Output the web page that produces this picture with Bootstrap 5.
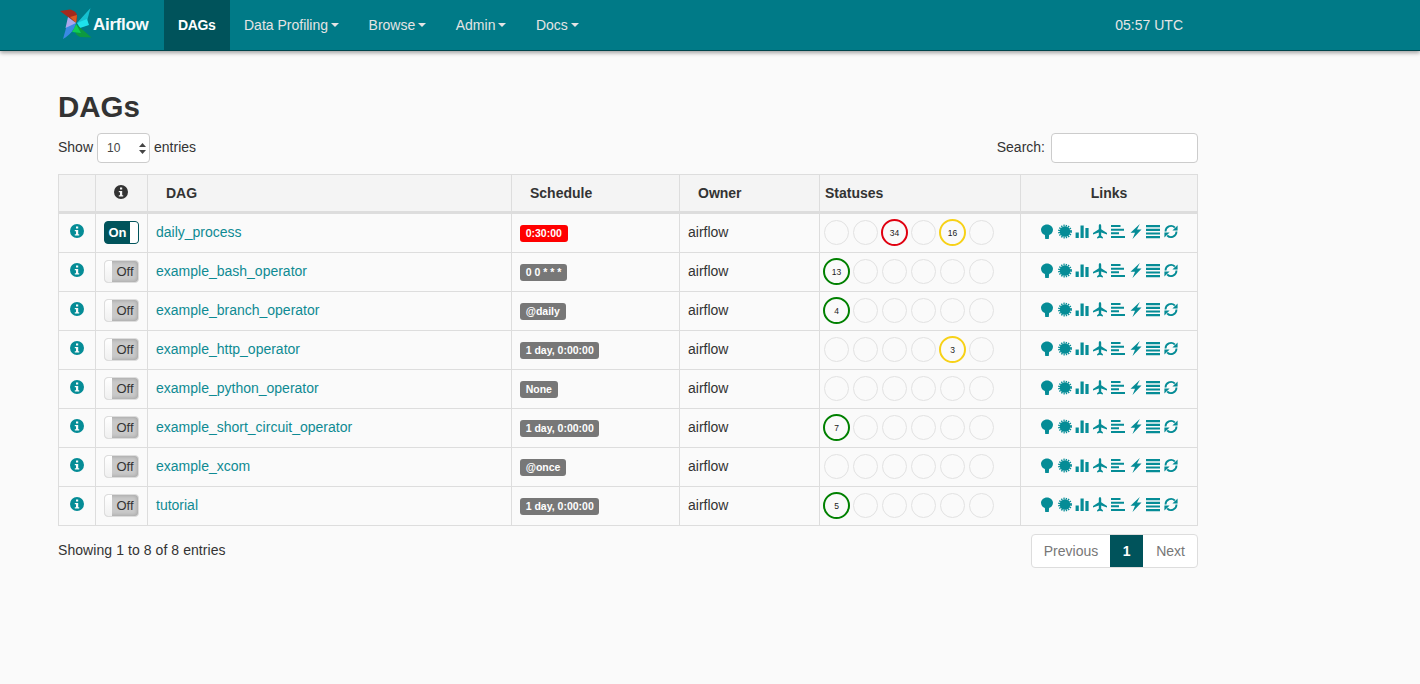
<!DOCTYPE html>
<html lang="en"><head><meta charset="utf-8"><title>Airflow - DAGs</title>
<link href="https://cdn.jsdelivr.net/npm/bootstrap@5.3.0/dist/css/bootstrap.min.css" rel="stylesheet">
<style>
html,body{height:100%}
body{background:#fafafa;color:#333;font-family:"Liberation Sans",Arial,sans-serif;font-size:14px;line-height:20px}
.af-nav{background:#007a87;height:51px;border-bottom:1px solid #00454c;box-shadow:0 2px 4px rgba(0,0,0,.35);padding:0 58px;display:flex;align-items:stretch}
.af-brand{display:flex;align-items:center;gap:1px;width:106px;color:#fff;font-size:17px;font-weight:700;letter-spacing:-.3px;text-decoration:none;opacity:.97}
.af-brand svg{margin-left:2px;margin-top:-1px}
.af-items{display:flex;list-style:none;margin:0;padding:0}
.af-items a{display:flex;align-items:center;height:50px;padding:0 15.5px 0 14px;color:#e4e4e4;text-decoration:none}
.af-items a.dropdown-toggle::after{margin-left:3px;border-top-width:4px;border-left-width:4px;border-right-width:4px;border-bottom:0}
.af-items a.here{background:#00535b;color:#fff;font-weight:700;padding:0 14px;width:66px;letter-spacing:-.4px}
.af-clock{margin-left:auto;color:#e6e6e6;align-self:center;margin-right:179px;margin-top:-1px}
.af-main{width:1140px;margin-left:58px}
.af-title{font-size:29.5px;font-weight:700;line-height:32px;margin:40px 0 10px;color:#333}
.af-field{height:30px;border:1px solid #ccc;border-radius:4px;background:#fff;font-size:12px;color:#444}
.af-sel{position:relative;width:53px;margin:0 4px}
.af-sel select{appearance:none;width:100%;height:30px;padding:0 0 0 9px;border:1px solid #ccc;border-radius:4px;background:#fff;font-size:12px;color:#444}
.af-sel svg{position:absolute;right:4px;top:10px;pointer-events:none}
.af-field.sr{width:147px;margin-left:6px;padding:0 6px}
.af-txt{margin-top:-2px}
.af-table{table-layout:fixed;width:1139px;margin:11px 0 8px;border-color:#ddd;--bs-table-bg:transparent;color:#333}
.af-table>thead>tr>th{background:#f4f4f4;height:38px;padding:0 0 0 18px;vertical-align:middle;border-bottom:3px solid #ddd;font-weight:700;color:#333}
.af-table>thead>tr>th.ps{padding-left:5px}
.af-table>thead>tr>th.ctr{padding:0;text-align:center}
.af-table>thead>tr>th.ctr.nudge{padding-right:2px}
.af-table>tbody>tr>td{height:39px;padding:8px;vertical-align:top;border-color:#ddd;line-height:20px}
.af-table>tbody>tr>td.ctr{text-align:center;padding:8px 0}
.af-table>tbody>tr>td.sta{padding:2px 0 0 2px}
.af-table>tbody>tr>td.lnk{padding:10px 0 0}
.w1{width:37px}.w2{width:52px}.w3{width:364px}.w4{width:168px}.w5{width:140px}.w6{width:201px}.w7{width:177px}
.af-link{color:#0e8a93;text-decoration:none}
.i-info{width:14px;height:14px;display:block;margin:2px auto 0;fill:#058c96}
.i-head{width:14px;height:14px;display:block;margin:0 auto 2px;fill:#333}
.af-tog{display:inline-flex;width:35px;height:23px;margin-top:-1px;border-radius:4px;overflow:hidden;vertical-align:top;font-size:13px}
.af-tog .cap{flex:1;display:flex;align-items:center;justify-content:center}
.af-tog .grip{width:8px;background:#fff}
.af-tog.on{background:#00535b;border:1px solid #00535b;color:#fff;font-weight:700}
.af-tog.off{border:1px solid #ddd;background:#c9c9c9;color:#333;box-shadow:inset 0 0 4px rgba(0,0,0,.25)}
.af-tog.off .grip{background:linear-gradient(#fff,#f0f0f0);width:7px}
.af-lab{display:inline-block;height:17px;line-height:17px;padding:0 5.7px;margin-top:3px;border-radius:3px;color:#fff;font-size:10.5px;font-weight:700;background:#777;vertical-align:top}
.af-lab.red{background:#f00}
.af-stat{display:flex}
.af-cell{width:29px;height:33px;flex:none;display:flex;align-items:center;justify-content:center}
.af-dot{width:25px;height:25px;flex:none;border:1px solid #e2e2e2;border-radius:50%;background:transparent;display:flex;align-items:center;justify-content:center;font-size:8.5px;color:#222}
.af-dot.g,.af-dot.r,.af-dot.y{width:27px;height:27px;border-width:2px}
.af-dot.g{border-color:green}.af-dot.r{border-color:#e00010}.af-dot.y{border-color:#f7d117}
.af-ico{display:flex;justify-content:center;gap:3.7px}
.af-ico svg{width:14px;height:15px;fill:#058c96;display:block}
.af-foot{display:flex;justify-content:space-between;align-items:flex-start}
.af-foot .info{margin-top:6px;letter-spacing:.07px}
.af-pager{display:flex;height:34px;border:1px solid #ddd;border-radius:4px;background:#fff;overflow:hidden;margin:0;padding:0;list-style:none}
.af-pager li{display:flex}
.af-pager span{display:flex;align-items:center;padding:0 12px;color:#777}
.af-pager span.now{background:#00535b;color:#fff;font-weight:700;width:33px;padding:0;justify-content:center}
.af-pager span.nx{padding:0 12px 0 13px}
</style></head>
<body>
<svg width="0" height="0" class="d-block position-absolute"><defs>
<symbol id="k-info" viewBox="0 0 14 14"><path fill-rule="evenodd" d="M7 0a7 7 0 1 1 0 14A7 7 0 0 1 7 0zM6 2.4v2.2h2.2V2.4zM4.8 6v1.2h1.2v3.1H4.8v1.3h4.4v-1.3H8.2V6z"/></symbol>
<symbol id="k-tree" viewBox="0 0 14 15"><path d="M7 .4c3.300 0 6 2.500 6 5.400 0 2.700-1.800 4.600-3.900 5.100L8.800 15H5.200l-.3-4.100C2.800 10.400 1 8.500 1 5.800 1 2.900 3.700.4 7 .4z"/></symbol>
<symbol id="k-cert" viewBox="0 0 14 15"><circle cx="7" cy="7.500" r="5.300"/><circle cx="7" cy="7.500" r="6" fill="none" stroke="#058c96" stroke-width="1.800" stroke-dasharray="1.300 1.056"/></symbol>
<symbol id="k-bars" viewBox="0 0 14 15"><path d="M.6 8.500h3.200V14H.6zM5.500 1.500h3.200V14H5.500zM10.400 4h3.200v10h-3.200z"/></symbol>
<symbol id="k-plane" viewBox="0 0 14 15"><path d="M7 0c.8 0 1.200 1 1.200 2v3.200L14 9v1.500L8.200 8.500v3.300l1.700 1.400V14.500L7 13.800l-2.900.7v-1.300l1.700-1.400V8.500L0 10.500V9l5.800-3.800V2C5.800 1 6.200 0 7 0z"/></symbol>
<symbol id="k-left" viewBox="0 0 14 15"><path d="M0 1h9.500v2H0zM0 4.700h13v2H0zM0 8.300h8v2H0zM0 12h14v2H0z"/></symbol>
<symbol id="k-flash" viewBox="0 0 14 15"><path d="M10.800 0 1.500 8.800H6L3.500 15 12.500 5.600H8z"/></symbol>
<symbol id="k-just" viewBox="0 0 14 15"><path d="M0 1h14v2.200H0zM0 4.700h14v2.200H0zM0 8.400h14v2.200H0zM0 12h14v2.200H0z"/></symbol>
<symbol id="k-ref" viewBox="0 0 14 15"><path d="M1.500 7.500A5.500 5.500 0 0 1 10.800 3.500M12.500 7.500A5.500 5.500 0 0 1 3.200 11.500" fill="none" stroke="#058c96" stroke-width="1.800"/><path d="M13.600 1.400V6.600H8.400zM.4 13.600V8.400H5.600z"/></symbol>
</defs></svg>

<nav class="af-nav">
<a class="af-brand" href="#"><svg width="32" height="33" viewBox="0 0 32 33"><path fill="#a8281a" d="M0 3 10 1.500c5 1 8 4 7 9L16 15z"/><path fill="#e05a20" d="M16 15 10 9l7-2z"/><path fill="#17c4d4" d="M30.500 0 27 13 17 15z"/><path fill="#1fe6f0" d="M17 15 27 11l2 6-9 3z"/><path fill="#0e9a3e" d="M16 16 31.500 29.500 20 29C15 27 13 22 16 16z"/><path fill="#11cf55" d="M16 16 12 24l9 1z"/><path fill="#3c8ae6" d="M16 15 8 13 3 31C10 27 14 22 16 15z"/><path fill="#b1a9ef" d="M16 15 8 9 5.500 20z"/></svg><span>Airflow</span></a>
<ul class="af-items">
<li><a class="here" href="#">DAGs</a></li>
<li><a class="dropdown-toggle" href="#">Data Profiling</a></li>
<li><a class="dropdown-toggle" href="#">Browse</a></li>
<li><a class="dropdown-toggle" href="#">Admin</a></li>
<li><a class="dropdown-toggle" href="#">Docs</a></li>
</ul>
<div class="af-clock">05:57 UTC</div>
</nav>

<main class="af-main">
<h2 class="af-title">DAGs</h2>
<div class="d-flex justify-content-between align-items-center">
<div class="d-flex align-items-center"><span class="af-txt">Show</span><div class="af-sel"><select aria-label="entries"><option>10</option></select><svg width="7" height="11" viewBox="0 0 7 11"><path fill="#444" d="M3.500 0 7 4H0zM3.500 11 0 7h7z"/></svg></div><span class="af-txt">entries</span></div>
<div class="d-flex align-items-center"><span class="af-txt">Search:</span><input class="af-field sr" type="search" aria-label="Search"></div>
</div>

<table class="table table-bordered af-table">
<colgroup><col class="w1"><col class="w2"><col class="w3"><col class="w4"><col class="w5"><col class="w6"><col class="w7"></colgroup>
<thead><tr><th class="ctr"></th><th class="ctr nudge"><svg class="i-head"><use href="#k-info"/></svg></th><th>DAG</th><th>Schedule</th><th>Owner</th><th class="ps">Statuses</th><th class="ctr">Links</th></tr></thead>
<tbody>
<tr><td class="ctr"><svg class="i-info"><use href="#k-info"/></svg></td><td class="ctr"><span class="af-tog on"><span class="cap">On</span><span class="grip"></span></span></td><td><a class="af-link" href="#">daily_process</a></td><td><span class="af-lab red">0:30:00</span></td><td>airflow</td>
<td class="sta"><div class="af-stat"><span class="af-cell"><span class="af-dot"></span></span><span class="af-cell"><span class="af-dot"></span></span><span class="af-cell"><span class="af-dot r">34</span></span><span class="af-cell"><span class="af-dot"></span></span><span class="af-cell"><span class="af-dot y">16</span></span><span class="af-cell"><span class="af-dot"></span></span></div></td>
<td class="lnk"><div class="af-ico"><svg><use href="#k-tree"/></svg><svg><use href="#k-cert"/></svg><svg><use href="#k-bars"/></svg><svg><use href="#k-plane"/></svg><svg><use href="#k-left"/></svg><svg><use href="#k-flash"/></svg><svg><use href="#k-just"/></svg><svg><use href="#k-ref"/></svg></div></td></tr>

<tr><td class="ctr"><svg class="i-info"><use href="#k-info"/></svg></td><td class="ctr"><span class="af-tog off"><span class="grip"></span><span class="cap">Off</span></span></td><td><a class="af-link" href="#">example_bash_operator</a></td><td><span class="af-lab">0 0 * * *</span></td><td>airflow</td>
<td class="sta"><div class="af-stat"><span class="af-cell"><span class="af-dot g">13</span></span><span class="af-cell"><span class="af-dot"></span></span><span class="af-cell"><span class="af-dot"></span></span><span class="af-cell"><span class="af-dot"></span></span><span class="af-cell"><span class="af-dot"></span></span><span class="af-cell"><span class="af-dot"></span></span></div></td>
<td class="lnk"><div class="af-ico"><svg><use href="#k-tree"/></svg><svg><use href="#k-cert"/></svg><svg><use href="#k-bars"/></svg><svg><use href="#k-plane"/></svg><svg><use href="#k-left"/></svg><svg><use href="#k-flash"/></svg><svg><use href="#k-just"/></svg><svg><use href="#k-ref"/></svg></div></td></tr>

<tr><td class="ctr"><svg class="i-info"><use href="#k-info"/></svg></td><td class="ctr"><span class="af-tog off"><span class="grip"></span><span class="cap">Off</span></span></td><td><a class="af-link" href="#">example_branch_operator</a></td><td><span class="af-lab">@daily</span></td><td>airflow</td>
<td class="sta"><div class="af-stat"><span class="af-cell"><span class="af-dot g">4</span></span><span class="af-cell"><span class="af-dot"></span></span><span class="af-cell"><span class="af-dot"></span></span><span class="af-cell"><span class="af-dot"></span></span><span class="af-cell"><span class="af-dot"></span></span><span class="af-cell"><span class="af-dot"></span></span></div></td>
<td class="lnk"><div class="af-ico"><svg><use href="#k-tree"/></svg><svg><use href="#k-cert"/></svg><svg><use href="#k-bars"/></svg><svg><use href="#k-plane"/></svg><svg><use href="#k-left"/></svg><svg><use href="#k-flash"/></svg><svg><use href="#k-just"/></svg><svg><use href="#k-ref"/></svg></div></td></tr>

<tr><td class="ctr"><svg class="i-info"><use href="#k-info"/></svg></td><td class="ctr"><span class="af-tog off"><span class="grip"></span><span class="cap">Off</span></span></td><td><a class="af-link" href="#">example_http_operator</a></td><td><span class="af-lab">1 day, 0:00:00</span></td><td>airflow</td>
<td class="sta"><div class="af-stat"><span class="af-cell"><span class="af-dot"></span></span><span class="af-cell"><span class="af-dot"></span></span><span class="af-cell"><span class="af-dot"></span></span><span class="af-cell"><span class="af-dot"></span></span><span class="af-cell"><span class="af-dot y">3</span></span><span class="af-cell"><span class="af-dot"></span></span></div></td>
<td class="lnk"><div class="af-ico"><svg><use href="#k-tree"/></svg><svg><use href="#k-cert"/></svg><svg><use href="#k-bars"/></svg><svg><use href="#k-plane"/></svg><svg><use href="#k-left"/></svg><svg><use href="#k-flash"/></svg><svg><use href="#k-just"/></svg><svg><use href="#k-ref"/></svg></div></td></tr>

<tr><td class="ctr"><svg class="i-info"><use href="#k-info"/></svg></td><td class="ctr"><span class="af-tog off"><span class="grip"></span><span class="cap">Off</span></span></td><td><a class="af-link" href="#">example_python_operator</a></td><td><span class="af-lab">None</span></td><td>airflow</td>
<td class="sta"><div class="af-stat"><span class="af-cell"><span class="af-dot"></span></span><span class="af-cell"><span class="af-dot"></span></span><span class="af-cell"><span class="af-dot"></span></span><span class="af-cell"><span class="af-dot"></span></span><span class="af-cell"><span class="af-dot"></span></span><span class="af-cell"><span class="af-dot"></span></span></div></td>
<td class="lnk"><div class="af-ico"><svg><use href="#k-tree"/></svg><svg><use href="#k-cert"/></svg><svg><use href="#k-bars"/></svg><svg><use href="#k-plane"/></svg><svg><use href="#k-left"/></svg><svg><use href="#k-flash"/></svg><svg><use href="#k-just"/></svg><svg><use href="#k-ref"/></svg></div></td></tr>

<tr><td class="ctr"><svg class="i-info"><use href="#k-info"/></svg></td><td class="ctr"><span class="af-tog off"><span class="grip"></span><span class="cap">Off</span></span></td><td><a class="af-link" href="#">example_short_circuit_operator</a></td><td><span class="af-lab">1 day, 0:00:00</span></td><td>airflow</td>
<td class="sta"><div class="af-stat"><span class="af-cell"><span class="af-dot g">7</span></span><span class="af-cell"><span class="af-dot"></span></span><span class="af-cell"><span class="af-dot"></span></span><span class="af-cell"><span class="af-dot"></span></span><span class="af-cell"><span class="af-dot"></span></span><span class="af-cell"><span class="af-dot"></span></span></div></td>
<td class="lnk"><div class="af-ico"><svg><use href="#k-tree"/></svg><svg><use href="#k-cert"/></svg><svg><use href="#k-bars"/></svg><svg><use href="#k-plane"/></svg><svg><use href="#k-left"/></svg><svg><use href="#k-flash"/></svg><svg><use href="#k-just"/></svg><svg><use href="#k-ref"/></svg></div></td></tr>

<tr><td class="ctr"><svg class="i-info"><use href="#k-info"/></svg></td><td class="ctr"><span class="af-tog off"><span class="grip"></span><span class="cap">Off</span></span></td><td><a class="af-link" href="#">example_xcom</a></td><td><span class="af-lab">@once</span></td><td>airflow</td>
<td class="sta"><div class="af-stat"><span class="af-cell"><span class="af-dot"></span></span><span class="af-cell"><span class="af-dot"></span></span><span class="af-cell"><span class="af-dot"></span></span><span class="af-cell"><span class="af-dot"></span></span><span class="af-cell"><span class="af-dot"></span></span><span class="af-cell"><span class="af-dot"></span></span></div></td>
<td class="lnk"><div class="af-ico"><svg><use href="#k-tree"/></svg><svg><use href="#k-cert"/></svg><svg><use href="#k-bars"/></svg><svg><use href="#k-plane"/></svg><svg><use href="#k-left"/></svg><svg><use href="#k-flash"/></svg><svg><use href="#k-just"/></svg><svg><use href="#k-ref"/></svg></div></td></tr>

<tr><td class="ctr"><svg class="i-info"><use href="#k-info"/></svg></td><td class="ctr"><span class="af-tog off"><span class="grip"></span><span class="cap">Off</span></span></td><td><a class="af-link" href="#">tutorial</a></td><td><span class="af-lab">1 day, 0:00:00</span></td><td>airflow</td>
<td class="sta"><div class="af-stat"><span class="af-cell"><span class="af-dot g">5</span></span><span class="af-cell"><span class="af-dot"></span></span><span class="af-cell"><span class="af-dot"></span></span><span class="af-cell"><span class="af-dot"></span></span><span class="af-cell"><span class="af-dot"></span></span><span class="af-cell"><span class="af-dot"></span></span></div></td>
<td class="lnk"><div class="af-ico"><svg><use href="#k-tree"/></svg><svg><use href="#k-cert"/></svg><svg><use href="#k-bars"/></svg><svg><use href="#k-plane"/></svg><svg><use href="#k-left"/></svg><svg><use href="#k-flash"/></svg><svg><use href="#k-just"/></svg><svg><use href="#k-ref"/></svg></div></td></tr>
</tbody></table>

<div class="af-foot"><div class="info">Showing 1 to 8 of 8 entries</div>
<ul class="af-pager"><li><span>Previous</span></li><li><span class="now">1</span></li><li><span class="nx">Next</span></li></ul></div>
</main>
<script src="https://cdn.jsdelivr.net/npm/bootstrap@5.3.0/dist/js/bootstrap.bundle.min.js"></script>
</body></html>
